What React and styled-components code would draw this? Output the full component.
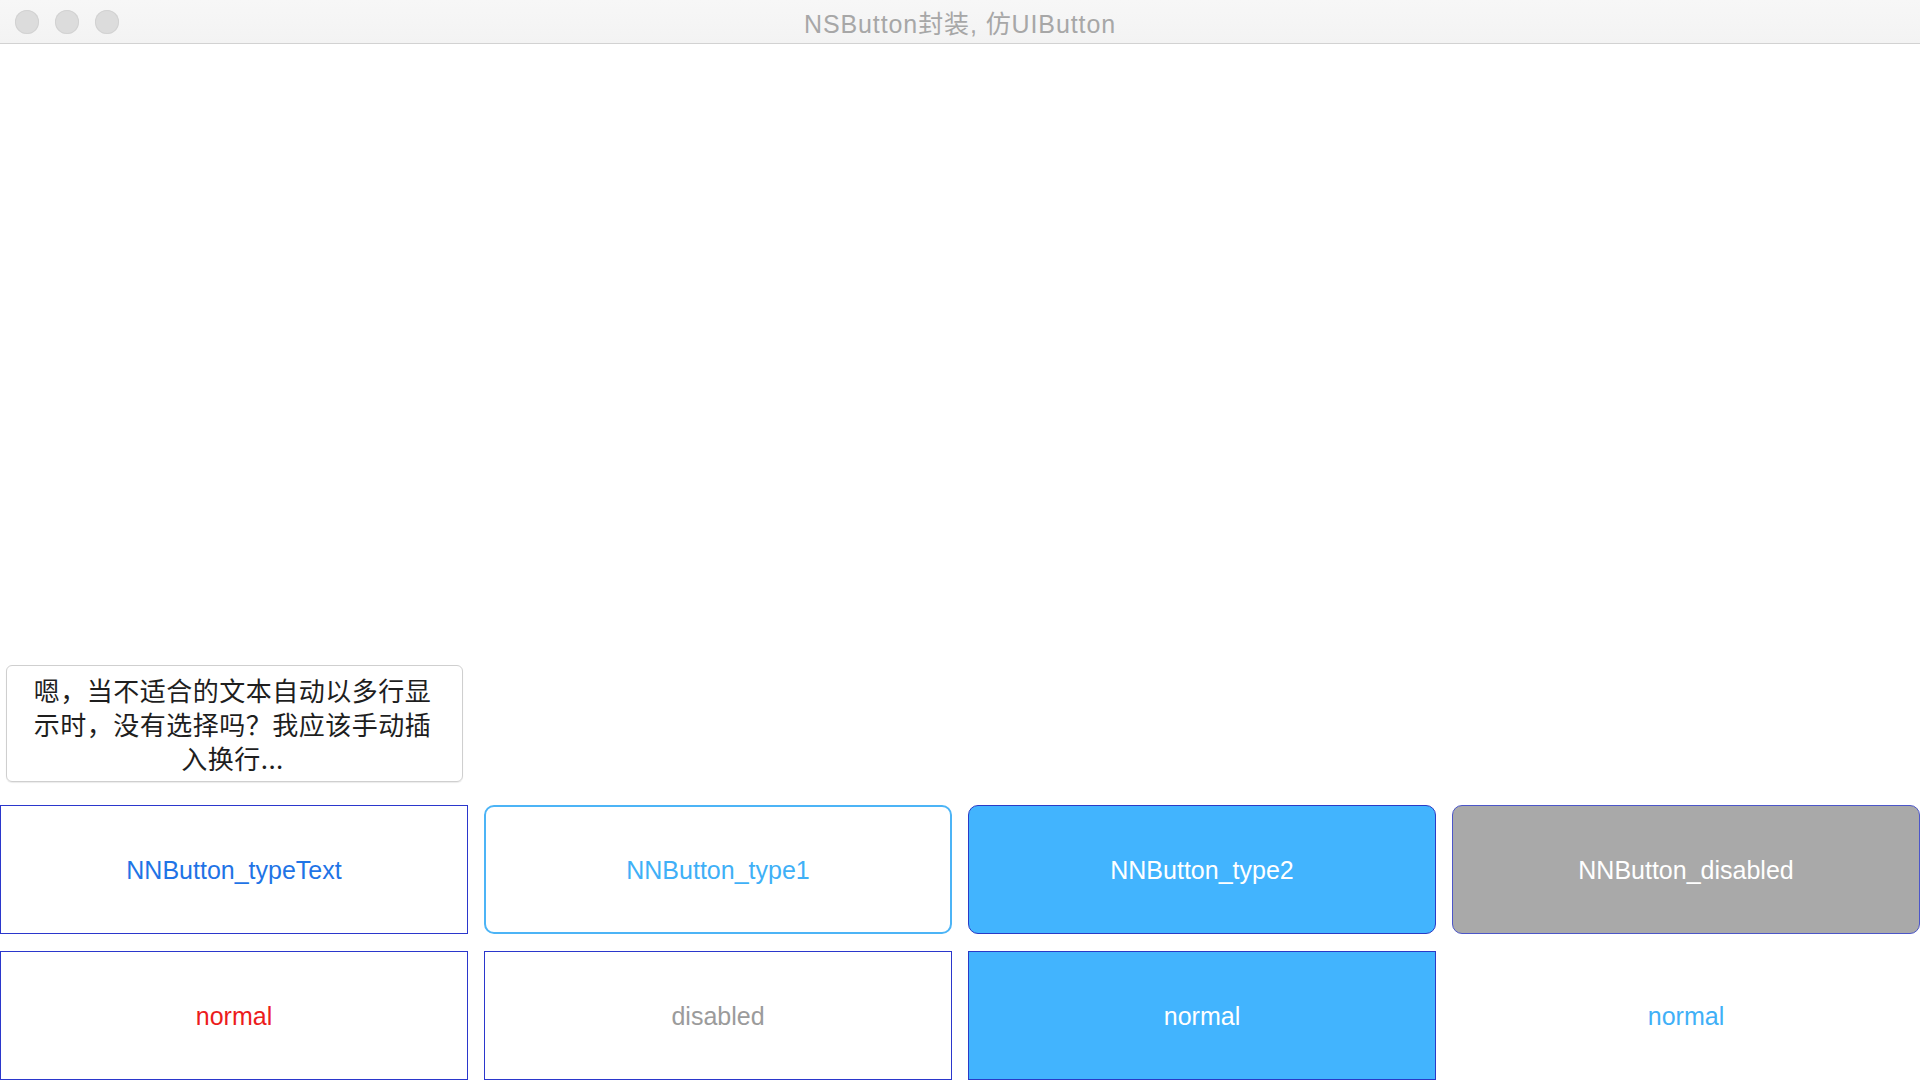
import React from "react";
import styled, { createGlobalStyle, css } from "styled-components";

const GlobalStyle = createGlobalStyle`
  html, body {
    margin: 0;
    padding: 0;
    background: #ffffff;
    overflow: hidden;
  }

  body {
    font-family: "Liberation Sans", "Noto Sans CJK SC", sans-serif;
  }
`;

const Window = styled.div`
  width: 1920px;
  height: 1080px;
  display: flex;
  flex-direction: column;
  overflow: hidden;
  background: #ffffff;
`;

const TitleBar = styled.div`
  position: relative;
  flex: 0 0 43px;
  display: flex;
  align-items: center;
  justify-content: center;
  background: linear-gradient(#f7f7f7, #f3f3f3);
  border-bottom: 1px solid #d2d2d2;
`;

const Lights = styled.div`
  position: absolute;
  left: 15px;
  top: 10px;
  display: flex;
  gap: 16px;
`;

const Light = styled.span`
  width: 24px;
  height: 24px;
  border-radius: 50%;
  background: #dcdcdc;
  box-shadow: inset 0 0 0 1px #d2d2d2;
`;

const Title = styled.div`
  font-family: "Liberation Sans", "Noto Sans CJK SC", sans-serif;
  font-size: 25px;
  letter-spacing: 0.9px;
  color: #a7a7a7;
`;

const Content = styled.div`
  flex: 1;
  display: flex;
  flex-direction: column;
  padding-top: 621px;
`;

const TextBox = styled.div`
  margin-left: 6px;
  width: 457px;
  height: 117px;
  box-sizing: border-box;
  padding: 0 20px 0 16px;
  display: flex;
  align-items: center;
  justify-content: center;
  text-align: center;
  border: 1px solid #cfcfcf;
  border-radius: 6px;
  box-shadow: 0 1px 1px rgba(0, 0, 0, 0.08);
  font-family: "Noto Sans CJK SC", sans-serif;
  font-size: 26px;
  letter-spacing: 0.5px;
  line-height: 34px;
  color: #1e1e1e;
`;

const ButtonGrid = styled.div`
  margin-top: 23px;
  display: grid;
  grid-template-columns: repeat(4, 468px);
  grid-auto-rows: 129px;
  column-gap: 16px;
  row-gap: 17px;
`;

const variants = {
  text: css`
    background: #ffffff;
    border: 1.5px solid #2b37cc;
    color: #1f74e6;
  `,
  type1: css`
    background: #ffffff;
    border: 2px solid #4cb4f6;
    border-radius: 10px;
    color: #3fb0f7;
  `,
  type2: css`
    background: #42b4fe;
    border: 1.5px solid #2a3ac6;
    border-radius: 10px;
    color: #ffffff;
  `,
  disabled: css`
    background: #a9a9a9;
    border: 1.5px solid #4c56c9;
    border-radius: 10px;
    color: #ffffff;
  `,
  red: css`
    background: #ffffff;
    border: 1.5px solid #2b37cc;
    color: #ec1c1c;
  `,
  gray: css`
    background: #ffffff;
    border: 1.5px solid #2b37cc;
    color: #9b9b9b;
  `,
  filled: css`
    background: #42b4fe;
    border: 1.5px solid #2a3ac6;
    color: #ffffff;
  `,
  plain: css`
    background: #ffffff;
    border: none;
    color: #3fb0f7;
  `,
};

const NNButton = styled.div`
  box-sizing: border-box;
  display: flex;
  align-items: center;
  justify-content: center;
  padding-top: 2px;
  font-family: "Liberation Sans", "Noto Sans CJK SC", sans-serif;
  font-size: 25px;
  ${(p) => variants[p.$variant]}
`;

const buttons = [
  { label: "NNButton_typeText", variant: "text" },
  { label: "NNButton_type1", variant: "type1" },
  { label: "NNButton_type2", variant: "type2" },
  { label: "NNButton_disabled", variant: "disabled" },
  { label: "normal", variant: "red" },
  { label: "disabled", variant: "gray" },
  { label: "normal", variant: "filled" },
  { label: "normal", variant: "plain" },
];

export default function App() {
  return (
    <>
      <GlobalStyle />
      <Window>
        <TitleBar>
          <Lights>
            <Light />
            <Light />
            <Light />
          </Lights>
          <Title>NSButton封装, 仿UIButton</Title>
        </TitleBar>
        <Content>
          <TextBox>
            嗯，当不适合的文本自动以多行显示时，没有选择吗？我应该手动插入换行...
          </TextBox>
          <ButtonGrid>
            {buttons.map((b, i) => (
              <NNButton key={i} $variant={b.variant}>
                {b.label}
              </NNButton>
            ))}
          </ButtonGrid>
        </Content>
      </Window>
    </>
  );
}
